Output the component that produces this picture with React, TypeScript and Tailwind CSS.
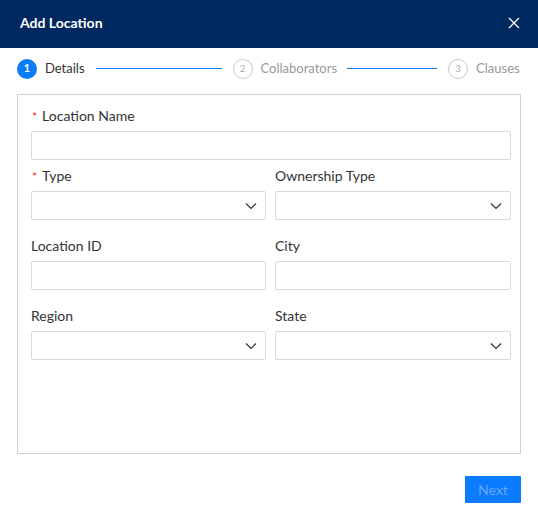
import React from 'react';

const Chevron = () => (
  <svg width="12" height="8" viewBox="0 0 12 8" fill="none" className="text-[#333]">
    <path d="M1 1.5L6 6.5L11 1.5" stroke="currentColor" strokeWidth="1.2" />
  </svg>
);

const Label = ({ text, required }: { text: string; required?: boolean }) => (
  <div className="flex items-center h-[20px] mb-[6px] text-[14px] text-[#333]">
    {required && <span className="text-[#f5222d] ml-[1px] mr-[5px] text-[12px] mt-[3px]">*</span>}
    {text}
  </div>
);

const Input = () => <div className="h-[29px] border border-[#d9d9d9] rounded-[2px] bg-white" />;

const Select = () => (
  <div className="h-[29px] border border-[#d9d9d9] rounded-[2px] bg-white flex items-center justify-end pr-[8px]">
    <Chevron />
  </div>
);

const Step = ({ n, text, active }: { n: number; text: string; active?: boolean }) => (
  <div className="flex items-center gap-[8px]">
    {active ? (
      <div className="w-[20px] h-[20px] rounded-full bg-[#0a7cf4] text-white text-[11px] font-bold flex items-center justify-center">{n}</div>
    ) : (
      <div className="w-[20px] h-[20px] rounded-full border border-[#c8c8c8] text-[#b0b0b0] text-[10px] flex items-center justify-center">{n}</div>
    )}
    <span className={active ? 'text-[13px] text-[#333]' : 'text-[13px] text-[#999]'}>{text}</span>
  </div>
);

export default function App() {
  return (
    <div className="w-[538px] h-[521px] bg-white" style={{ fontFamily: 'Lato, "Open Sans", sans-serif' }}>
      <div className="h-[48px] bg-[#002861] flex items-center justify-between pl-[20px] pr-[18px] pb-[3px]">
        <span className="text-white text-[14px] font-bold">Add Location</span>
        <svg width="12" height="12" viewBox="0 0 12 12" fill="none">
          <path d="M1 1L11 11M11 1L1 11" stroke="white" strokeWidth="1.3" />
        </svg>
      </div>

      <div className="flex items-center h-[40px] pl-[17px] pt-[1px] mb-[6px]">
        <Step n={1} text="Details" active />
        <div className="w-[126px] h-px bg-[#0a7cf4] ml-[11px] mr-[11px]" />
        <Step n={2} text="Collaborators" />
        <div className="w-[90px] h-px bg-[#0a7cf4] ml-[10px] mr-[11px]" />
        <Step n={3} text="Clauses" />
      </div>

      <div className="mx-[17px] h-[360px] border border-[#d0d0d0] pl-[13px] pr-[9px] pt-[10px]">
        <Label text="Location Name" required />
        <Input />
        <div className="grid grid-cols-[235px_1fr] gap-x-[9px] mt-[5px]">
          <div>
            <Label text="Type" required />
            <Select />
          </div>
          <div>
            <Label text="Ownership Type" />
            <Select />
          </div>
          <div className="mt-[15px]">
            <Label text="Location ID" />
            <Input />
          </div>
          <div className="mt-[15px]">
            <Label text="City" />
            <Input />
          </div>
          <div className="mt-[15px]">
            <Label text="Region" />
            <Select />
          </div>
          <div className="mt-[15px]">
            <Label text="State" />
            <Select />
          </div>
        </div>
      </div>

      <div className="flex justify-end px-[17px] mt-[22px]">
        <button className="w-[56px] h-[27px] bg-[#0a7cff] text-[#6aa6f7] text-[14px] rounded-[1px]">Next</button>
      </div>
    </div>
  );
}
